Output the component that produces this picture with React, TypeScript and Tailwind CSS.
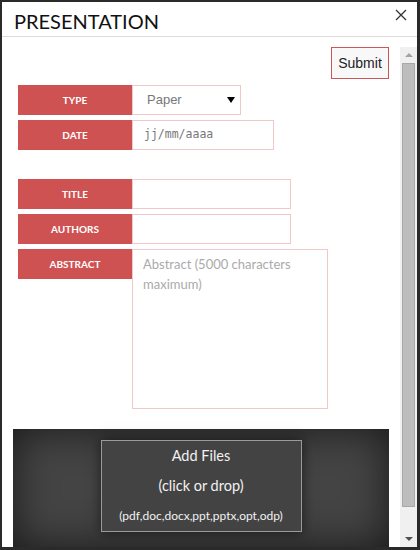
import React from "react";

const lato = { fontFamily: "Lato, 'Open Sans', sans-serif" };

function Label({ text }: { text: string }) {
  return (
    <div
      className="w-[114px] h-[30px] shrink-0 bg-[#cf5253] text-white text-[10px] font-bold flex items-center justify-center"
      style={lato}
    >
      {text}
    </div>
  );
}

export default function App() {
  return (
    <div className="w-[420px] h-[550px] bg-[#2a2a2a] pt-[2px] pl-[2px] pr-[3px] pb-[3px]">
      <div className="w-full h-full bg-white flex flex-col overflow-hidden">
        <div className="h-[35px] shrink-0 border-b border-[#dddddd] flex items-center justify-between pl-[12px] pr-[10px]">
          <div className="text-[20px] text-[#111] leading-none pt-[3px]" style={lato}>
            PRESENTATION
          </div>
          <svg width="12" height="12" viewBox="0 0 12 12" className="mt-[-8px]">
            <path d="M1 1 L11 11 M11 1 L1 11" stroke="#333" strokeWidth="1.3" fill="none" />
          </svg>
        </div>
        <div className="flex-1 flex pt-[10px] min-h-0">
          <div className="flex-1 flex flex-col min-w-0">
            <div className="flex justify-end pr-[11px]">
              <div
                className="w-[58px] h-[32px] border border-[#c9585d] bg-[#f8f8f8] text-[14px] text-[#222] font-normal flex items-center justify-center"
                style={{ fontFamily: "'Liberation Sans', Arial, sans-serif" }}
              >
                Submit
              </div>
            </div>
            <div className="pl-[16px] mt-[6px] flex flex-col">
              <div className="flex">
                <Label text="TYPE" />
                <div
                  className="w-[109px] h-[30px] border border-[#f0c8c8] flex items-center justify-between pl-[14px] pr-[5px] text-[13px] text-[#777]"
                  style={{ fontFamily: "'Liberation Sans', Arial, sans-serif" }}
                >
                  <span>Paper</span>
                  <svg width="8" height="6" viewBox="0 0 8 6">
                    <path d="M0 0 L8 0 L4 6 Z" fill="#000" />
                  </svg>
                </div>
              </div>
              <div className="flex mt-[5px]">
                <Label text="DATE" />
                <div
                  className="w-[142px] h-[30px] border border-[#f0c8c8] flex items-center pl-[11px] text-[11.5px] text-[#777]"
                  style={{ fontFamily: "'DejaVu Sans Mono', monospace" }}
                >
                  jj/mm/aaaa
                </div>
              </div>
              <div className="flex mt-[29px]">
                <Label text="TITLE" />
                <div className="w-[159px] h-[30px] border border-[#f0c8c8]" />
              </div>
              <div className="flex mt-[5px]">
                <Label text="AUTHORS" />
                <div className="w-[159px] h-[30px] border border-[#f0c8c8]" />
              </div>
              <div className="flex mt-[5px] items-start">
                <Label text="ABSTRACT" />
                <div
                  className="w-[196px] h-[160px] border border-[#f0c8c8] pl-[10px] pr-[10px] pt-[4px] text-[13px] leading-[20px] text-[#aaaaaa]"
                  style={lato}
                >
                  Abstract (5000 characters maximum)
                </div>
              </div>
            </div>
            <div className="mt-[20px] ml-[11px] mr-[11px] flex-1 bg-[#444444] shadow-[inset_0_0_40px_rgba(0,0,0,0.65)] flex justify-center pt-[11px]">
              <div
                className="w-[201px] h-[92px] border border-[#9a9a9a] bg-[#434343] shadow-[0_0_12px_rgba(0,0,0,0.6)] flex flex-col items-center text-[#f2f2f2]"
                style={lato}
              >
                <div className="h-[30px] leading-[30px] text-[14.5px]">Add Files</div>
                <div className="h-[30px] leading-[30px] text-[14.5px]">(click or drop)</div>
                <div className="h-[30px] leading-[30px] text-[12px]">(pdf,doc,docx,ppt,pptx,opt,odp)</div>
              </div>
            </div>
          </div>
          <div className="w-[17px] shrink-0 bg-[#f0f0f0] flex flex-col items-center">
            <div className="h-[16px] flex items-center justify-center">
              <svg width="8" height="4" viewBox="0 0 8 4">
                <path d="M0 4 L8 4 L4 0 Z" fill="#a3a3a3" />
              </svg>
            </div>
            <div className="w-[13px] h-[444px] bg-[#bdbdbd] border border-[#a8a8a8]" />
            <div className="flex-1" />
            <div className="h-[17px] flex items-center justify-center">
              <svg width="8" height="4" viewBox="0 0 8 4">
                <path d="M0 0 L8 0 L4 4 Z" fill="#505050" />
              </svg>
            </div>
          </div>
        </div>
      </div>
    </div>
  );
}
